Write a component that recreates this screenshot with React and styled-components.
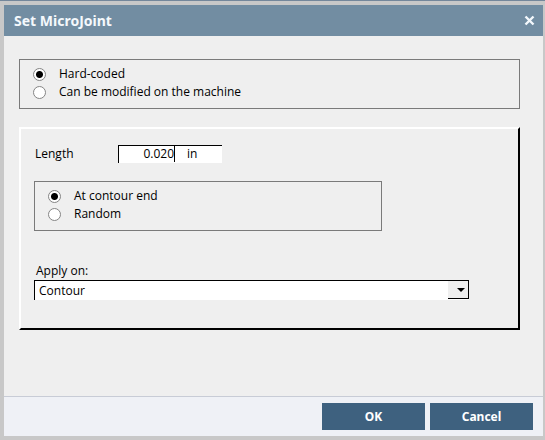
import React, { useState } from "react";
import styled, { createGlobalStyle } from "styled-components";

const GlobalStyle = createGlobalStyle`
  * { box-sizing: border-box; }
  body {
    margin: 0;
    background: #c8c8c8;
    color: #000;
    font-family: "Open Sans", "Noto Sans", sans-serif;
    font-size: 12px;
    line-height: 18px;
  }
  input, select, button { font: inherit; color: inherit; margin: 0; }
`;

const Backdrop = styled.div`
  display: flex;
  flex-direction: column;
  min-height: 100vh;
  border-top: 1px solid #74879b;
`;

const Dialog = styled.form`
  flex: 1;
  display: flex;
  flex-direction: column;
  border: solid #c8c8c8;
  border-width: 4px 2px 4px 4px;
  background: #efefef;
`;

const TitleBar = styled.header`
  display: flex;
  align-items: center;
  justify-content: space-between;
  height: 31px;
  padding: 0 8px 0 10px;
  background: #728da2;
  color: #f4f8fc;
`;

const Title = styled.h1`
  margin: 0;
  font-family: "Noto Sans", sans-serif;
  font-size: 14px;
  font-weight: 700;
`;

const CloseButton = styled.button`
  display: flex;
  padding: 0;
  border: 0;
  background: none;
`;

const Content = styled.main`
  flex: 1;
  display: flex;
  flex-direction: column;
  gap: 18px;
  padding: 23px 23px 24px 15px;
`;

const OptionGroup = styled.fieldset`
  width: ${(p) => p.$width || "100%"};
  min-width: 0;
  margin: 0;
  padding: 5px 13px 7px;
  border: 1px solid #7a7a7a;
`;

const Option = styled.label`
  display: flex;
  align-items: center;
  gap: 13px;
`;

const Radio = styled.input`
  appearance: none;
  flex: none;
  width: 13px;
  height: 13px;
  border: 1px solid #858585;
  border-radius: 50%;
  background: #fff;

  &:checked {
    background: radial-gradient(circle, #000 3px, #fff 4px);
  }
`;

const Panel = styled.section`
  display: flex;
  flex-direction: column;
  padding: 16px 49px 28px 13px;
  border: 2px solid;
  border-color: #fff #000 #000 #fff;
`;

const LengthRow = styled.div`
  display: flex;
  align-items: center;
  margin-bottom: 18px;
`;

const LengthLabel = styled.label`
  width: 84px;
  padding-left: 1px;
`;

const Measure = styled.div`
  display: flex;
  width: 104px;
  height: 18px;
  border: solid #000;
  border-width: 1px 0 0 1px;
  background: #fff;
`;

const MeasureInput = styled.input`
  width: 56px;
  height: 16px;
  padding: 0;
  border: 0;
  border-right: 1px solid #000;
  outline: 0;
  background: none;
  text-align: right;
`;

const Unit = styled.span`
  padding-left: 12px;
  line-height: 16px;
`;

const ApplyField = styled.div`
  display: grid;
  margin-top: 31px;
`;

const ApplyLabel = styled.label`
  padding-left: 2px;
`;

const SelectFrame = styled.div`
  display: grid;
  grid-template-columns: 1fr 21px;
  height: 20px;
  border: solid #000;
  border-width: 1px 0 0 1px;
`;

const Select = styled.select`
  grid-area: 1 / 1 / 2 / 3;
  appearance: none;
  height: 19px;
  padding: 0 24px 0 4px;
  border: 0;
  border-radius: 0;
  outline: 0;
  background: #fff;
`;

const SelectArrow = styled.span`
  grid-area: 1 / 2;
  display: flex;
  align-items: center;
  justify-content: flex-end;
  height: 18px;
  padding-right: 3px;
  border: solid #000;
  border-width: 0 1px 1px 0;
  background: #efefef;
  pointer-events: none;
`;

const Footer = styled.footer`
  display: flex;
  justify-content: flex-end;
  gap: 5px;
  padding: 6px 10px;
  border-top: 1px solid #c8ccd6;
  background: #eff1f6;
`;

const ActionButton = styled.button`
  width: 103px;
  height: 27px;
  padding: 0;
  border: 0;
  background: #3e617f;
  color: #fff;
  font-family: "Noto Sans", sans-serif;
  font-weight: 700;
`;

function RadioOptions({ label, name, options, width }) {
  const [selected, setSelected] = useState(options[0]);
  return (
    <OptionGroup aria-label={label} $width={width}>
      {options.map((option) => (
        <Option key={option}>
          <Radio
            type="radio"
            name={name}
            checked={selected === option}
            onChange={() => setSelected(option)}
          />
          {option}
        </Option>
      ))}
    </OptionGroup>
  );
}

export default function App() {
  return (
    <Backdrop>
      <GlobalStyle />
      <Dialog onSubmit={(e) => e.preventDefault()}>
        <TitleBar>
          <Title>Set MicroJoint</Title>
          <CloseButton type="button" aria-label="Close">
            <svg width="11" height="11" viewBox="0 0 11 11" aria-hidden="true">
              <path d="M1.5 1.5 9.5 9.5M9.5 1.5 1.5 9.5" stroke="#f4f8fc" strokeWidth="2.4" />
            </svg>
          </CloseButton>
        </TitleBar>
        <Content>
          <RadioOptions
            label="Mode"
            name="mode"
            options={["Hard-coded", "Can be modified on the machine"]}
          />
          <Panel>
            <LengthRow>
              <LengthLabel htmlFor="length">Length</LengthLabel>
              <Measure>
                <MeasureInput id="length" defaultValue="0.020" />
                <Unit>in</Unit>
              </Measure>
            </LengthRow>
            <RadioOptions
              label="Position"
              name="position"
              options={["At contour end", "Random"]}
              width="80%"
            />
            <ApplyField>
              <ApplyLabel htmlFor="apply">Apply on:</ApplyLabel>
              <SelectFrame>
                <Select id="apply" defaultValue="Contour">
                  <option>Contour</option>
                </Select>
                <SelectArrow>
                  <svg width="8" height="4" viewBox="0 0 8 4" aria-hidden="true">
                    <path d="M0 0H8L4 4Z" fill="#000" />
                  </svg>
                </SelectArrow>
              </SelectFrame>
            </ApplyField>
          </Panel>
        </Content>
        <Footer>
          <ActionButton type="submit">OK</ActionButton>
          <ActionButton type="button">Cancel</ActionButton>
        </Footer>
      </Dialog>
    </Backdrop>
  );
}
